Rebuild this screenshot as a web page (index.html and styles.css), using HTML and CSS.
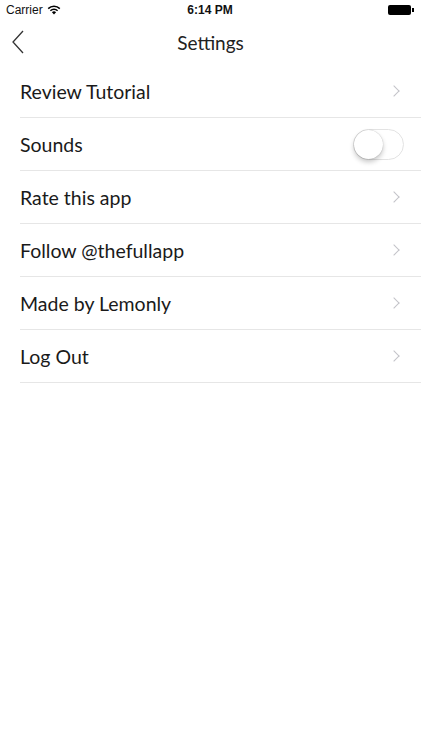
FILE: index.html
```html
<!DOCTYPE html>
<html lang="en">
<head>
    <meta charset="UTF-8">
    <meta name="viewport" content="width=device-width, initial-scale=1.0">
    <title>Settings</title>
    <link rel="stylesheet" href="styles.css">
</head>
<body>
    <div class="status-bar">
        <div class="status-left">
            Carrier
            <svg class="wifi" width="14" height="10" viewBox="0 0 14 10">
                <path d="M7 9.6 L4.9 7.3 A3 3 0 0 1 9.1 7.3 Z" fill="#000"/>
                <path d="M3.4 5.8 A5.1 5.1 0 0 1 10.6 5.8" stroke="#000" stroke-width="1.5" fill="none"/>
                <path d="M1.2 3.6 A8.2 8.2 0 0 1 12.8 3.6" stroke="#000" stroke-width="1.5" fill="none"/>
            </svg>
        </div>
        <div class="status-time">6:14 PM</div>
        <div class="status-right">
            <span class="battery"></span><span class="battery-nub"></span>
        </div>
    </div>

    <div class="nav-bar">
        <svg class="back" width="14" height="24" viewBox="0 0 14 24">
            <path d="M12 1 L2 12 L12 23" stroke="#333" stroke-width="1.3" fill="none"/>
        </svg>
        <h1>Settings</h1>
    </div>

    <ul class="settings-list">
        <li class="row">Review Tutorial <span class="chevron"></span></li>
        <li class="row">Sounds <span class="toggle"><span class="knob"></span></span></li>
        <li class="row">Rate this app <span class="chevron"></span></li>
        <li class="row">Follow @thefullapp <span class="chevron"></span></li>
        <li class="row">Made by Lemonly <span class="chevron"></span></li>
        <li class="row">Log Out <span class="chevron"></span></li>
    </ul>
</body>
</html>
```

FILE: styles.css
```css
body {
    margin: 0;
    background-color: #fff;
    font-family: Lato, "Noto Sans", sans-serif;
    color: #111;
}

.status-bar {
    height: 20px;
    display: flex;
    align-items: center;
    justify-content: space-between;
    padding: 0 7px 0 6px;
    font-family: "Liberation Sans", Arial, sans-serif;
    font-size: 12px;
}

.status-left {
    display: flex;
    align-items: center;
    gap: 4px;
    width: 80px;
}

.status-time {
    font-weight: bold;
}

.status-right {
    width: 80px;
    display: flex;
    justify-content: flex-end;
    align-items: center;
}

.battery {
    width: 23px;
    height: 10px;
    background-color: #000;
    border-radius: 2px;
}

.battery-nub {
    width: 1.5px;
    height: 4px;
    background-color: #000;
    margin-left: 1px;
}

.nav-bar {
    height: 44px;
    display: flex;
    align-items: center;
    justify-content: center;
    position: relative;
}

.back {
    position: absolute;
    left: 11px;
    top: 10px;
}

.nav-bar h1 {
    margin: 0;
    font-size: 19px;
    font-weight: normal;
    color: #222;
}

.settings-list {
    list-style: none;
    margin: 0 0 0 20px;
    padding: 1px 0 0;
}

.row {
    height: 52px;
    border-bottom: 1px solid #e6e6e6;
    display: flex;
    align-items: center;
    justify-content: space-between;
    padding-right: 18px;
    font-size: 19.5px;
    color: #1a1a1a;
}

.chevron {
    width: 7px;
    height: 7px;
    border-top: 1.5px solid #c3c3c8;
    border-right: 1.5px solid #c3c3c8;
    transform: rotate(45deg);
    margin-right: 5px;
}

.toggle {
    width: 49px;
    height: 29px;
    border: 1px solid #e3e3e3;
    border-radius: 16px;
    position: relative;
    margin-right: -1px;
}

.knob {
    position: absolute;
    left: 0;
    top: 0;
    width: 29px;
    height: 29px;
    border-radius: 50%;
    background-color: #fff;
    box-shadow: 0 3px 5px rgba(0, 0, 0, 0.22), 0 0 1px rgba(0, 0, 0, 0.3);
}
```
